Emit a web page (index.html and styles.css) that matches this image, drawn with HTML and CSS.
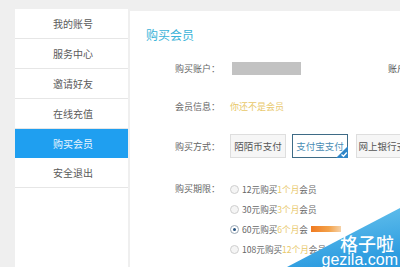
FILE: index.html
```html
<!DOCTYPE html>
<html lang="zh-CN">
<head>
<meta charset="utf-8">
<title>购买会员</title>
<link rel="stylesheet" href="styles.css">
</head>
<body>
<div class="page">
  <aside class="side">
    <a class="item">我的账号</a>
    <a class="item">服务中心</a>
    <a class="item">邀请好友</a>
    <a class="item">在线充值</a>
    <a class="item active">购买会员</a>
    <a class="item">安全退出</a>
  </aside>
  <main class="main">
    <h2 class="title">购买会员</h2>
    <div class="row r1">
      <span class="label">购买账户：</span>
      <span class="acct"></span>
      <span class="balance">账户余额：</span>
    </div>
    <div class="row r2">
      <span class="label">会员信息：</span>
      <span class="note">你还不是会员</span>
    </div>
    <div class="row r3">
      <span class="label">购买方式：</span>
      <div class="btns">
        <span class="btn">陌陌币支付</span>
        <span class="btn sel">支付宝支付<svg class="tick" width="12" height="12" viewBox="0 0 12 12"><polygon points="12,0 12,12 0,12" fill="#2f86c8"/><polyline points="5.5,8.5 7.5,10.3 10.8,6.5" fill="none" stroke="#fff" stroke-width="1.3"/></svg></span>
        <span class="btn">网上银行支付</span>
      </div>
    </div>
    <div class="row r4">
      <span class="label">购买期限：</span>
      <div class="opts">
        <div class="opt"><i class="radio"></i>12元购买<em>1个月</em>会员</div>
        <div class="opt"><i class="radio"></i>30元购买<em>3个月</em>会员</div>
        <div class="opt"><i class="radio on"></i>60元购买<em>6个月</em>会<b class="blob"></b></div>
        <div class="opt"><i class="radio"></i>108元购买<em>12个月</em>会员</div>
      </div>
    </div>
  </main>
  <div class="wm">
    <svg class="wm-bg" width="113" height="59" viewBox="0 0 113 59">
      <defs>
        <linearGradient id="g" x1="0" y1="0" x2="0.3" y2="1">
          <stop offset="0" stop-color="#6cc6ee"/>
          <stop offset="1" stop-color="#2d9ce0"/>
        </linearGradient>
      </defs>
      <polygon points="113,0 113,59 0,59" fill="url(#g)"/>
    </svg>
    <span class="wm-cn">格子啦</span>
    <span class="wm-en">gezila.com</span>
  </div>
</div>
</body>
</html>
```

FILE: styles.css
```css
* { box-sizing: border-box; }
html, body { margin: 0; padding: 0; }
body {
  background: #efefef;
  font-family: "Noto Sans CJK SC", "Noto Sans", sans-serif;
  width: 400px;
  height: 267px;
  overflow: hidden;
}
.page {
  position: relative;
  display: flex;
  gap: 2px;
  padding: 9px 0 0 15px;
  height: 267px;
  overflow: hidden;
}
.side {
  width: 113px;
  flex: none;
  background: #fff;
  display: flex;
  flex-direction: column;
}
.item {
  height: 30px;
  line-height: 29px;
  border-bottom: 1px solid #e6e6e6;
  text-align: center;
  font-size: 10px;
  color: #5a5a5a;
  padding-left: 3px;
}
.item.active {
  background: #1f9ff0;
  color: #eaf6ff;
  border-bottom-color: #1f9ff0;
  height: 29px;
  line-height: 29px;
}
.main {
  flex: 1;
  min-width: 0;
  background: #fff;
  margin-top: 2px;
  padding: 16px 0 0 16px;
  display: flex;
  flex-direction: column;
  overflow: hidden;
  white-space: nowrap;
}
.title {
  margin: 0;
  font-size: 12px;
  line-height: 16px;
  font-weight: normal;
  color: #3ab3d8;
}
.row {
  display: flex;
  align-items: center;
  font-size: 9px;
  color: #666;
}
.row > * { flex: none; }
.label {
  width: 74px;
  text-align: right;
  margin-right: 10px;
  color: #666;
}
.r1 { margin-top: 18px; height: 14px; }
.acct {
  width: 69px;
  height: 13px;
  margin-left: 2px;
  background: #c2c2c2;
}
.balance { margin-left: 87px; color: #555; }
.r2 { margin-top: 24px; height: 14px; }
.note { color: #e8c86a; }
.r3 { margin-top: 21px; height: 24px; }
.btns { display: flex; gap: 6px; }
.btn {
  position: relative;
  width: 56px;
  height: 24px;
  line-height: 22px;
  text-align: center;
  font-size: 9.5px;
  color: #555;
  background: #f6f6f6;
  border: 1px solid #dedede;
  flex: none;
}
.btn.sel {
  background: #fff;
  border-color: #3e6b86;
  color: #4a8db5;
}
.btn.sel + .btn { margin-left: 2px; width: 62px; }
.tick { position: absolute; right: -1px; bottom: -1px; }
.r4 { margin-top: 21px; align-items: flex-start; }
.r4 .label { line-height: 20px; }
.opts { display: flex; flex-direction: column; font-size: 8.6px; }
.opt {
  height: 20px;
  display: flex;
  align-items: center;
  color: #666;
}
.opt em { font-style: normal; color: #e8c86a; }
.radio {
  width: 9px;
  height: 9px;
  border-radius: 50%;
  border: 1px solid #cfcfcf;
  background: #f5f5f5;
  margin-right: 3px;
  position: relative;
  flex: none;
}
.radio.on { border-color: #9aa7b4; background: #fff; }
.radio.on::after {
  content: "";
  position: absolute;
  left: 2px;
  top: 2px;
  width: 3px;
  height: 3px;
  border-radius: 50%;
  background: #23507e;
}
.blob {
  display: inline-block;
  width: 30px;
  height: 6px;
  margin-left: 3px;
  background: linear-gradient(90deg, #f07a20 0%, #f3a24a 60%, #f6d2a8 100%);
}
.wm {
  position: absolute;
  right: 0;
  bottom: 0;
  width: 113px;
  height: 59px;
}
.wm-bg { position: absolute; left: 0; top: 0; }
.wm-cn {
  position: absolute;
  right: 6px;
  bottom: 14px;
  font-size: 18px;
  line-height: 20px;
  color: #fff;
  font-weight: 500;
}
.wm-en {
  position: absolute;
  right: 2px;
  bottom: -2px;
  font-family: "Liberation Sans", sans-serif;
  font-size: 16px;
  line-height: 18px;
  color: #fff;
}
```
